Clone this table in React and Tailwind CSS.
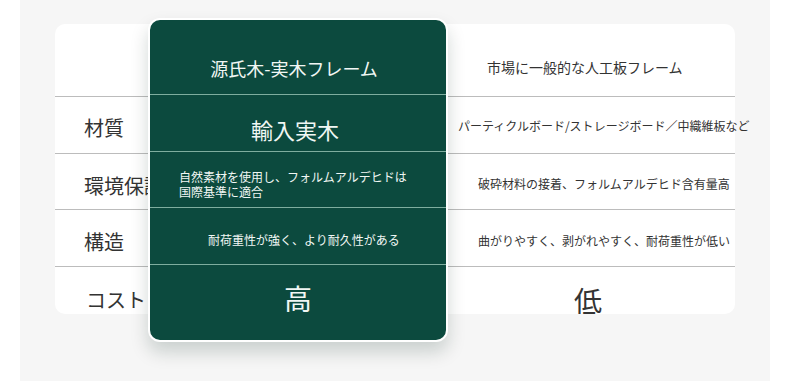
import React from 'react';

// comparison rows: label, highlighted (our product), market alternative
const rows = [
  { label: '材質', ours: '輸入実木', theirs: 'パーティクルボード/ストレージボード／中織維板など' },
  { label: '環境保護', ours: null, theirs: '破砕材料の接着、フォルムアルデヒド含有量高' },
  { label: '構造', ours: '耐荷重性が強く、より耐久性がある', theirs: '曲がりやすく、剥がれやすく、耐荷重性が低い' },
  { label: 'コスト', ours: '高', theirs: '低' },
];

const font = { fontFamily: '"Noto Sans CJK JP", "Noto Sans", sans-serif' };

export default function App() {
  return (
    <div className="w-[790px] h-[392px] bg-white" style={font}>
      <div className="relative ml-[20px] w-[750px] h-[381px] bg-[#f6f6f6] pl-[35px] pt-[24px]">
        {/* white comparison table */}
        <div className="w-[680px] h-[290px] bg-white rounded-[10px] flex flex-col text-[#333]">
          <div className="h-[73px] shrink-0 border-b border-[#bcbcbc] grid grid-cols-[95px_296px_289px]">
            <div />
            <div />
            <div className="flex items-center pl-[41px] pt-[14px] text-[14px] whitespace-nowrap">市場に一般的な人工板フレーム</div>
          </div>
          <div className="h-[57px] shrink-0 border-b border-[#bcbcbc] grid grid-cols-[95px_296px_289px]">
            <div className="flex items-center pl-[29px] pt-[6px] text-[20px] whitespace-nowrap">{rows[0].label}</div>
            <div />
            <div className="flex items-center pl-[12px] pt-[1px] text-[12px] whitespace-nowrap">{rows[0].theirs}</div>
          </div>
          <div className="h-[56px] shrink-0 border-b border-[#bcbcbc] grid grid-cols-[95px_296px_289px]">
            <div className="flex items-center pl-[29px] pt-[8px] text-[20px] whitespace-nowrap">{rows[1].label}</div>
            <div />
            <div className="flex items-center pl-[32px] pt-[5px] text-[12px] whitespace-nowrap">{rows[1].theirs}</div>
          </div>
          <div className="h-[57px] shrink-0 border-b border-[#bcbcbc] grid grid-cols-[95px_296px_289px]">
            <div className="flex items-center pl-[29px] pt-[8px] text-[20px] whitespace-nowrap">{rows[2].label}</div>
            <div />
            <div className="flex items-center pl-[32px] pt-[5px] text-[12px] whitespace-nowrap">{rows[2].theirs}</div>
          </div>
          <div className="h-[47px] shrink-0 overflow-hidden rounded-b-[10px] grid grid-cols-[95px_296px_289px]">
            <div className="h-[57px] flex items-center pl-[31px] pt-[9px] text-[20px] whitespace-nowrap">{rows[3].label}</div>
            <div />
            <div className="h-[57px] flex items-center pl-[128px] pt-[9px] text-[28px] leading-none whitespace-nowrap">{rows[3].theirs}</div>
          </div>
        </div>

        {/* highlighted column floating over the table */}
        <div className="absolute left-[128px] top-[18px] w-[300px] h-[324px] bg-[#0c4a3e] border-2 border-white rounded-[12px] shadow-[0_10px_18px_rgba(0,40,30,0.18)] flex flex-col text-[#f1f7f4] overflow-hidden">
          <div className="h-[75px] shrink-0 border-b border-[#7fae9f] flex items-center justify-center pr-[8px] pt-[22px] text-[18px] whitespace-nowrap">
            源氏木-実木フレーム
          </div>
          <div className="h-[57px] shrink-0 border-b border-[#7fae9f] flex items-center justify-center pr-[6px] pt-[12px] text-[22px]">
            {rows[0].ours}
          </div>
          <div className="h-[56px] shrink-0 border-b border-[#7fae9f] flex flex-col justify-center pl-[29px] pt-[9px] text-[12px] leading-[15px] whitespace-nowrap">
            <span>自然素材を使用し、フォルムアルデヒドは</span>
            <span>国際基準に適合</span>
          </div>
          <div className="h-[57px] shrink-0 border-b border-[#7fae9f] flex items-center justify-center pl-[12px] pt-[7px] text-[12px] whitespace-nowrap">
            {rows[2].ours}
          </div>
          <div className="h-[57px] shrink-0 flex items-center justify-center pt-[9px] text-[28px] leading-none">
            {rows[3].ours}
          </div>
        </div>
      </div>
    </div>
  );
}
